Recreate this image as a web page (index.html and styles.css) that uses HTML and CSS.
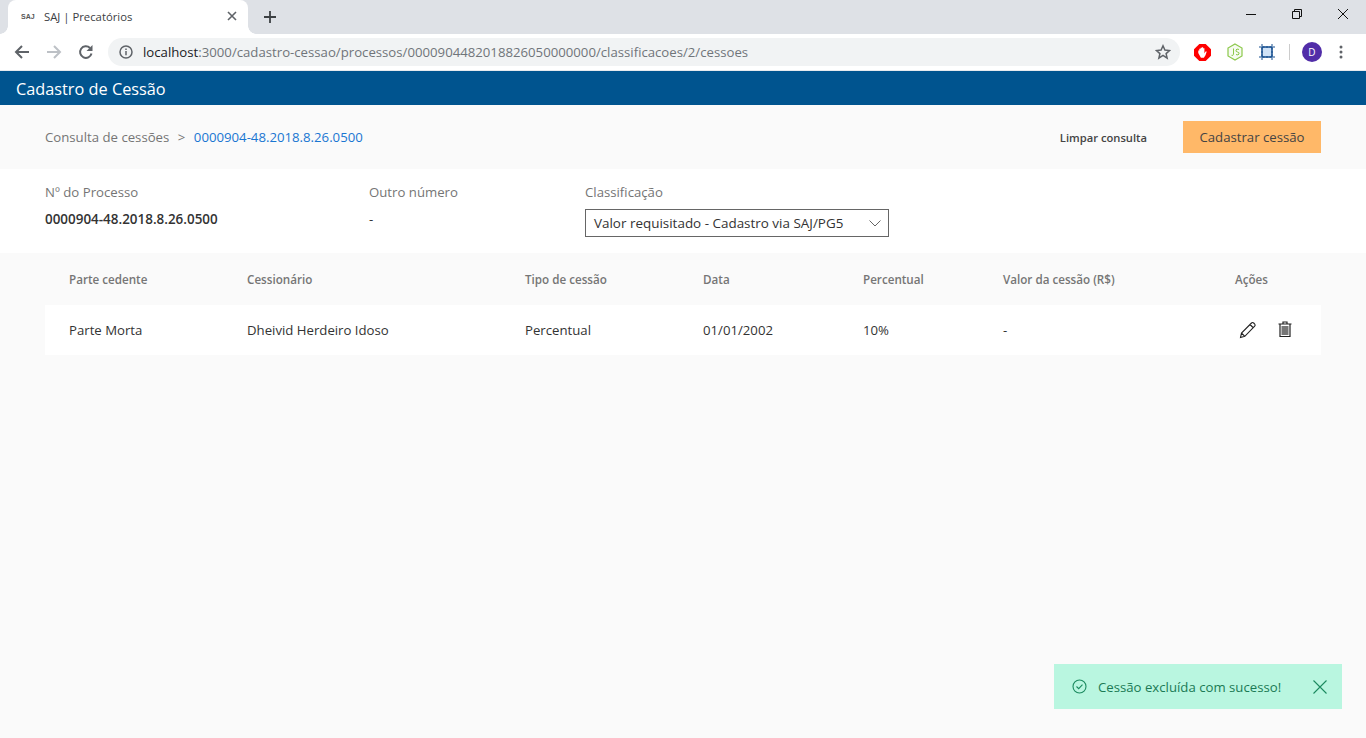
FILE: index.html
```html
<!DOCTYPE html>
<html lang="pt-BR">
<head>
<meta charset="utf-8">
<title>SAJ | Precatórios</title>
<link rel="stylesheet" href="styles.css">
</head>
<body>
<div class="tabstrip">
  <div class="tab">
    <span class="favicon">SAJ</span>
    <span class="tab-title">SAJ | Precatórios</span>
    <svg class="tab-close" width="10" height="10" viewBox="0 0 10 10"><path d="M1 1l8 8M9 1l-8 8" stroke="#5f6368" stroke-width="1.6" fill="none"/></svg>
  </div>
  <svg class="newtab" width="12" height="12" viewBox="0 0 12 12"><path d="M6 0v12M0 6h12" stroke="#3c4043" stroke-width="1.8" fill="none"/></svg>
  <div class="winctrls">
    <svg width="12" height="12" viewBox="0 0 12 12"><path d="M1 6.5h10" stroke="#111" fill="none"/></svg>
    <svg width="12" height="12" viewBox="0 0 12 12"><path d="M1.500 3.500h7v7h-7zM3.500 3.500v-2h7v7h-2" stroke="#111" fill="none"/></svg>
    <svg width="12" height="12" viewBox="0 0 12 12"><path d="M1 1l10 10M11 1L1 11" stroke="#111" fill="none"/></svg>
  </div>
</div>
<div class="toolbar">
  <svg class="nav-back" width="16" height="16" viewBox="0 0 16 16"><path d="M15 8H2M8 2L2 8l6 6" stroke="#5f6368" stroke-width="2" fill="none"/></svg>
  <svg class="nav-fwd" width="16" height="16" viewBox="0 0 16 16"><path d="M1 8h13M8 2l6 6-6 6" stroke="#bdc1c6" stroke-width="2" fill="none"/></svg>
  <svg class="nav-reload" width="16" height="16" viewBox="0 0 16 16"><path d="M13.500 9.500A5.800 5.800 0 1 1 12 4" stroke="#5f6368" stroke-width="2" fill="none"/><path d="M14.500 1v6h-6z" fill="#5f6368"/></svg>
  <div class="omnibox">
    <svg class="info-icon" width="14" height="14" viewBox="0 0 14 14"><circle cx="7" cy="7" r="6" stroke="#5f6368" stroke-width="1.500" fill="none"/><path d="M7 6v4.200M7 3.500v1.500" stroke="#5f6368" stroke-width="1.500" fill="none"/></svg>
    <span class="url"><span class="host">localhost</span>:3000/cadastro-cessao/processos/0000904482018826050000000/classificacoes/2/cessoes</span>
    <svg class="star" width="16" height="16" viewBox="0 0 16 16"><path d="M8 1.800l1.900 4.200 4.600.5-3.400 3.100 1 4.500L8 11.300l-4.100 2.800 1-4.500L1.500 6.500l4.600-.5z" stroke="#5f6368" stroke-width="1.500" fill="none"/></svg>
  </div>
  <svg class="ext ext-abp" width="17" height="17" viewBox="0 0 16 16"><path d="M5 0h6l5 5v6l-5 5H5l-5-5V5z" fill="#f00"/><path d="M4 8.500V6h1v2V4.500h1.200V7V3.500h1.200V7V3h1.200v4V4h1.200v5l1-2h1.200l-1.200 3.500-1.500 2.500H6.500z" fill="#fff"/></svg>
  <svg class="ext ext-node" width="16" height="18" viewBox="0 0 16 18"><path d="M8 1l7 4v8l-7 4-7-4V5z" fill="#f6fbf1" stroke="#8cc84b" stroke-width="1.200"/><path d="M6.500 5.500v6q0 1.200-2 .8M12 6.500q-2.500-1.200-3 .5t1.500 2 1.500 2-3 .5" stroke="#8cc84b" fill="none"/></svg>
  <svg class="ext ext-hash" width="16" height="16" viewBox="0 0 16 16"><rect x="3" y="3" width="10" height="10" fill="#cfe2f7" stroke="#174f8f" stroke-width="1.500"/><path d="M3 0v16M13 0v16M0 3h16M0 13h16" stroke="#174f8f" stroke-dasharray="2 1.500"/></svg>
  <span class="tb-sep"></span>
  <span class="avatar">D</span>
  <svg class="kebab" width="4" height="14" viewBox="0 0 4 14"><circle cx="2" cy="2" r="1.500" fill="#5f6368"/><circle cx="2" cy="7" r="1.500" fill="#5f6368"/><circle cx="2" cy="12" r="1.500" fill="#5f6368"/></svg>
</div>
<header class="appbar">Cadastro de Cessão</header>
<nav class="crumbbar">
  <div class="crumbs">
    <span class="crumb">Consulta de cessões</span>
    <span class="crumb-sep">&gt;</span>
    <span class="crumb-current">0000904-48.2018.8.26.0500</span>
  </div>
  <span class="link-btn">Limpar consulta</span>
  <span class="primary-btn">Cadastrar cessão</span>
</nav>
<section class="info">
  <div class="field">
    <span class="label">Nº do Processo</span>
    <span class="value value-strong">0000904-48.2018.8.26.0500</span>
  </div>
  <div class="field">
    <span class="label">Outro número</span>
    <span class="value">-</span>
  </div>
  <div class="field">
    <span class="label">Classificação</span>
    <div class="select">
      <span class="select-text">Valor requisitado - Cadastro via SAJ/PG5</span>
      <svg width="12" height="7" viewBox="0 0 12 7"><path d="M.5.5L6 6l5.500-5.500" stroke="#666" fill="none"/></svg>
    </div>
  </div>
</section>
<main class="table">
  <div class="grid thead">
    <span>Parte cedente</span><span>Cessionário</span><span>Tipo de cessão</span><span>Data</span><span>Percentual</span><span>Valor da cessão (R$)</span><span>Ações</span>
  </div>
  <div class="grid trow">
    <span>Parte Morta</span><span>Dheivid Herdeiro Idoso</span><span>Percentual</span><span>01/01/2002</span><span>10%</span><span>-</span>
    <span class="actions">
      <svg width="18" height="18" viewBox="0 0 18 18"><path d="M1.500 16.500l1-4.500L12.500 2q1-1 2.200 0l1 1q1 1.200 0 2.200L5.800 15.300zM2.500 12l3.300 3.300M11 3.500l3.500 3.500" stroke="#222" stroke-width="1.100" fill="none"/></svg>
      <svg class="trash" width="14" height="16" viewBox="0 0 14 16"><path d="M.5 3h13M5 3V1h4v2M2 3v12.500h10V3" stroke="#222" stroke-width="1.200" fill="none"/><rect x="3.500" y="5" width="7" height="9" fill="#777"/></svg>
    </span>
  </div>
</main>
<div class="toast">
  <svg width="15" height="15" viewBox="0 0 15 15"><circle cx="7.500" cy="7.500" r="6.500" stroke="#1b8a5f" stroke-width="1.100" fill="none"/><path d="M4.500 7.500l2.200 2.200 3.800-4" stroke="#1b8a5f" stroke-width="1.100" fill="none"/></svg>
  <span class="toast-text">Cessão excluída com sucesso!</span>
  <svg class="toast-close" width="14" height="14" viewBox="0 0 14 14"><path d="M.5.5l13 13M13.500.5l-13 13" stroke="#1b8a5f" stroke-width="1.100" fill="none"/></svg>
</div>
</body>
</html>
```
FILE: styles.css
```css
* { box-sizing: border-box; }
html, body { height: 100%; }
body {
  margin: 0;
  background: #fafafa;
  font-family: "Open Sans", "Noto Sans", sans-serif;
  font-size: 13.2px;
  color: #333;
  overflow: hidden;
  position: relative;
}
.tabstrip {
  height: 34px;
  background: #dee1e6;
  display: flex;
  align-items: flex-end;
  padding-left: 8px;
}
.tab {
  position: relative;
  width: 240px;
  height: 34px;
  background: #fff;
  border-radius: 8px 8px 0 0;
  display: flex;
  align-items: center;
  padding: 0 11px 2px 13px;
}
.tab::before, .tab::after {
  content: "";
  position: absolute;
  bottom: 0;
  width: 8px;
  height: 8px;
}
.tab::before { left: -8px; background: radial-gradient(circle at 0 0, #dee1e6 7.5px, #fff 8px); }
.tab::after { right: -8px; background: radial-gradient(circle at 100% 0, #dee1e6 7.5px, #fff 8px); }
.favicon { font: bold 7px "Liberation Sans", sans-serif; color: #555; width: 23px; }
.tab-title { flex: 1; font-size: 11.3px; color: #3c4043; }
.newtab { margin: 0 0 11px 16px; }
.winctrls { margin-left: auto; height: 100%; display: flex; align-items: flex-start; gap: 34px; padding: 8px 17px 0 0; }
.toolbar {
  height: 36px;
  background: #fff;
  display: flex;
  align-items: center;
  padding-left: 14px;
}
.nav-fwd { margin-left: 16px; }
.nav-reload { margin-left: 16px; }
.omnibox {
  width: 1072px;
  height: 28px;
  margin-left: 14px;
  background: #f1f3f4;
  border-radius: 14px;
  display: flex;
  align-items: center;
  padding: 0 9px 0 11px;
}
.url { flex: 1; margin-left: 10px; font-size: 13.2px; color: #70757a; white-space: nowrap; }
.host { color: #202124; }
.ext-abp { margin-left: 14px; }
.ext-node { margin-left: 16px; }
.ext-hash { margin-left: 16px; }
.tb-sep { width: 1px; height: 16px; background: #ccc; margin-left: 14px; }
.avatar {
  width: 20px; height: 20px; border-radius: 50%;
  background: #512da8; color: #fff; font-size: 10px;
  display: flex; align-items: center; justify-content: center;
  margin-left: 12px;
}
.kebab { margin-left: 17px; }
.appbar {
  height: 35px;
  background: #00548f;
  border-top: 1px solid #e6eaee;
  color: #fff;
  font-size: 16.3px;
  line-height: 35px;
  padding: 1px 0 0 16px;
}
.crumbbar {
  height: 64px;
  display: flex;
  align-items: center;
  padding: 0 45px;
  background: #fafafa;
}
.crumbs { flex: 1; display: flex; gap: 8.5px; }
.crumb, .crumb-sep { color: #757575; }
.crumb-current { color: #1976d2; }
.link-btn { font-size: 11.2px; font-weight: 600; color: #444; margin-right: 36px; }
.primary-btn {
  width: 138px; height: 32px; background: #ffb868; color: #444;
  font-weight: 500;
  display: flex; align-items: center; justify-content: center;
}
.info {
  height: 84px;
  background: #fff;
  display: grid;
  grid-template-columns: 324px 216px 1fr;
  padding: 14px 45px 0;
}
.field { display: flex; flex-direction: column; }
.label { color: #757575; line-height: 18px; }
.value { margin-top: 9px; line-height: 18px; }
.value-strong { font-weight: 600; font-size: 13.45px; color: #333; }
.select {
  width: 304px; height: 28px; margin-top: 8px;
  border: 1px solid #666; background: #fff;
  display: flex; align-items: center; justify-content: space-between;
  padding: 0 7px 0 8px;
  font-size: 13.45px;
}
.select-text { margin-bottom: 1px; }
.table { padding: 0 45px; }
.grid {
  display: grid;
  grid-template-columns: 178px 278px 178px 160px 140px 232px 1fr;
  padding-left: 24px;
}
.thead { height: 52px; align-items: center; font-size: 11.65px; font-weight: 600; color: #757575; }
.trow { height: 50px; align-items: center; background: #fff; }
.actions { display: flex; align-items: center; gap: 21px; padding-left: 4px; }
.trash { margin-bottom: 2px; }
.toast {
  position: absolute;
  right: 24px; bottom: 29px;
  width: 288px; height: 45px;
  background: #b9f6e0;
  display: flex; align-items: center;
  padding: 0 15px 0 18px;
  color: #1b7a55;
}
.toast-text { flex: 1; margin-left: 11px; }
```
